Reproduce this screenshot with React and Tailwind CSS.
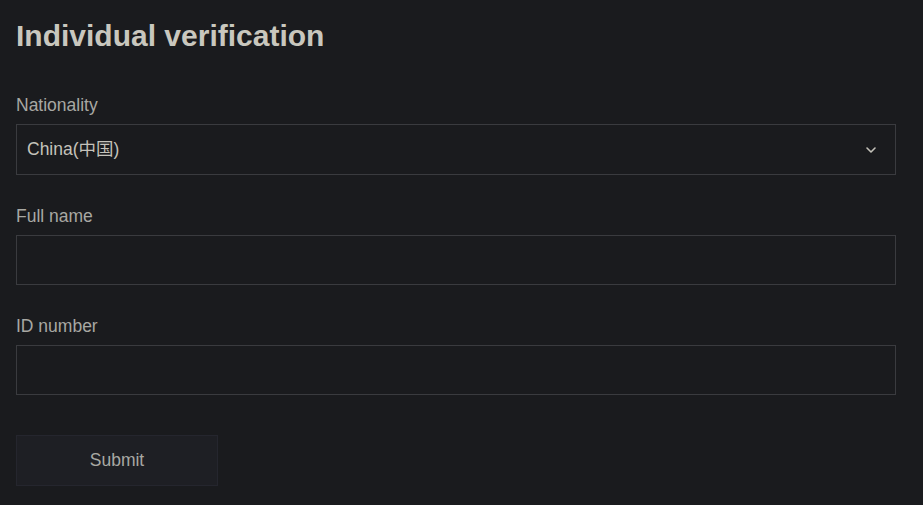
import React, { useState } from 'react';

// Individual verification form
const Field = ({ label, children }) => (
  <div className="mb-[31px]">
    <label className="block text-[17.5px] leading-[20px] text-[#a8a8a3] mb-[9px]">{label}</label>
    {children}
  </div>
);

export default function App() {
  const [name, setName] = useState('');
  const [idNo, setIdNo] = useState('');

  return (
    <div className="min-h-screen bg-[#1a1b1e] pl-4 pr-[27px] pt-[18px]" style={{ fontFamily: '"Liberation Sans", Arial, "Noto Sans CJK SC", sans-serif' }}>
      <h1 className="text-[30px] leading-[36px] font-bold text-[#c9c7be] mb-[41px]">Individual verification</h1>

      <Field label="Nationality">
        <div className="flex items-center justify-between h-[51px] border border-[#3a3b3f] px-[10px] text-[17.5px] text-[#c4c2ba]">
          <span>China(中国)</span>
          <svg width="12" height="12" viewBox="0 0 12 12" fill="none" className="mr-[8px]">
            <path d="M2 4l4 4 4-4" stroke="#c4c2ba" strokeWidth="1.6" strokeLinecap="round" strokeLinejoin="round" />
          </svg>
        </div>
      </Field>

      <Field label="Full name">
        <input
          className="block w-full h-[50px] bg-transparent border border-[#3a3b3f] px-[10px] text-[17.5px] text-[#c4c2ba] outline-none"
          value={name}
          onChange={(e) => setName(e.target.value)}
        />
      </Field>

      <Field label="ID number">
        <input
          className="block w-full h-[50px] bg-transparent border border-[#3a3b3f] px-[10px] text-[17.5px] text-[#c4c2ba] outline-none"
          value={idNo}
          onChange={(e) => setIdNo(e.target.value)}
        />
      </Field>

      <button className="mt-[9px] w-[202px] h-[51px] bg-[#1e1f24] border border-[#25262e] text-[17.5px] text-[#a8a8a3]">
        Submit
      </button>
    </div>
  );
}
